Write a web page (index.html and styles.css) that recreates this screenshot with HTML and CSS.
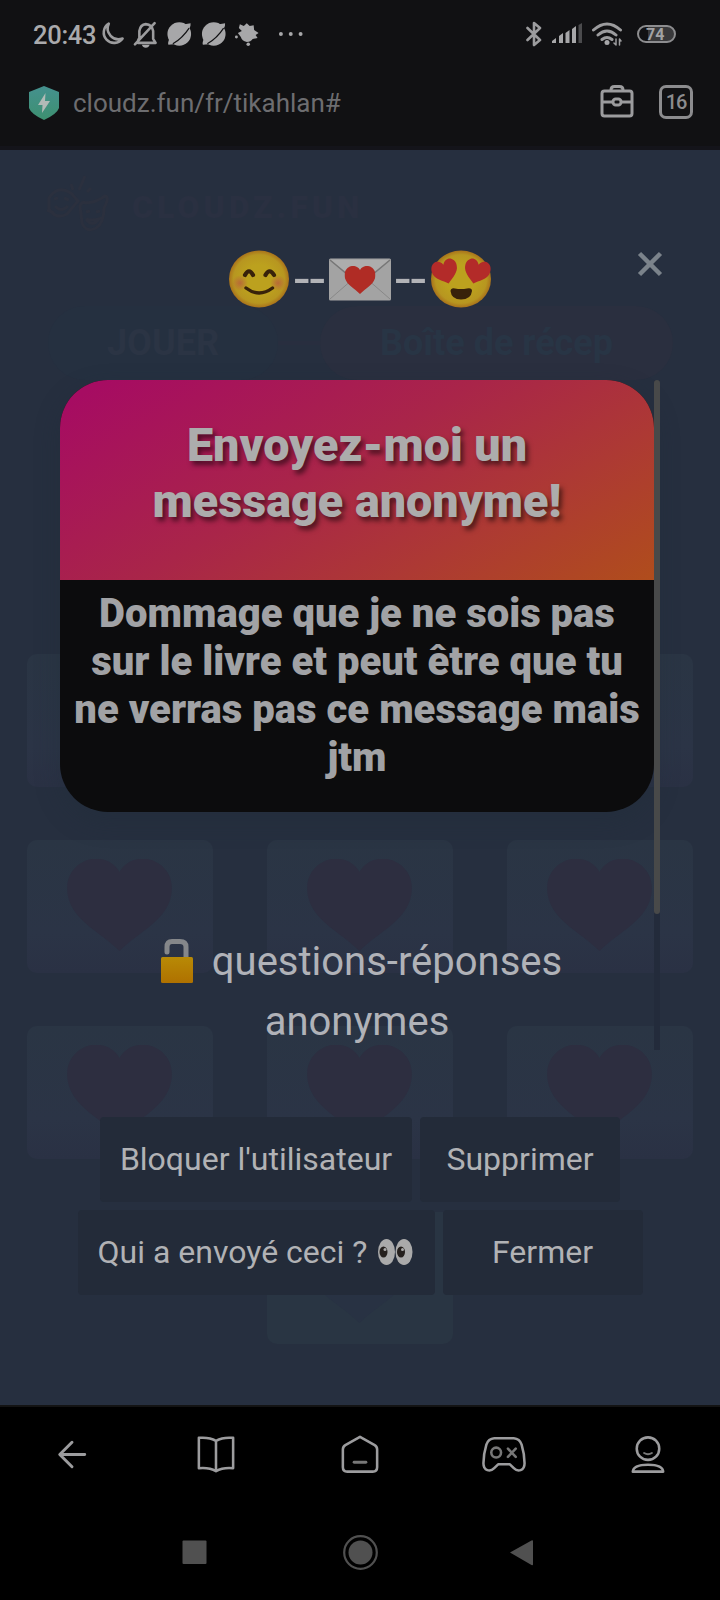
FILE: index.html
```html
<!DOCTYPE html>
<html lang="fr">
<head>
<meta charset="utf-8">
<title>cloudz.fun</title>
<link rel="stylesheet" href="styles.css">
</head>
<body>
<svg class="defs" width="0" height="0" aria-hidden="true">
  <defs>
    <radialGradient id="face" cx=".5" cy=".5" r=".5"><stop offset=".5" stop-color="#bca11e"/><stop offset=".85" stop-color="#b79620"/><stop offset="1" stop-color="#a9721b"/></radialGradient>
    <radialGradient id="blush"><stop offset="0" stop-color="#b8643a" stop-opacity=".9"/><stop offset="1" stop-color="#b8643a" stop-opacity="0"/></radialGradient>
    <linearGradient id="lock" x2="0" y2="1"><stop offset="0" stop-color="#b88a06"/><stop offset="1" stop-color="#af7100"/></linearGradient>
    <linearGradient id="shield" x2="0" y2="1"><stop offset="0" stop-color="#45918f"/><stop offset="1" stop-color="#3d9070"/></linearGradient>
    <symbol id="heart" viewBox="0 0 105 92"><path d="M52.500 13C61-2 78-2 87 2C103 9 108 25 103 41C96 63 72 73 52.500 92C33 73 9 63 2 41C-3 25 2 9 18 2C27-2 44-2 52.500 13Z"/></symbol>
  </defs>
</svg>
<div class="phone">
  <header class="top">
    <div class="status">
      <span class="clock">20:43</span>
      <svg class="cell" viewBox="0 0 34 30"><path d="M13 4.500A10.500 10.500 0 1 0 27 19.500A11 11 0 0 1 13 4.500Z" class="line w25"/></svg>
      <svg class="cell" viewBox="0 0 34 30"><path d="M8 24H26L23.500 20V12Q22.500 5.500 16 5Q10.500 5.500 9.500 12V19L8 22M5 25.500L25 4" class="line w25"/><path d="M12 26H20Q19 29 16 29T12 26Z" class="solid"/></svg>
      <svg class="cell" viewBox="0 0 34 30"><circle cx="16.500" cy="15" r="12" class="solid"/><path d="M22 5L28 4Q28.500 6 26.500 10ZM11 25.500L5.500 26Q4.500 24 6.500 20Z" class="solid"/><path d="M10 25Q20 19 26.500 9" fill="none" stroke="#111113" stroke-width="1.200"/></svg>
      <svg class="cell" viewBox="0 0 34 30"><circle cx="17" cy="15" r="12" class="solid"/><path d="M22.500 5L28.500 4Q29 6 27 10ZM11.500 25.500L6 26Q5 24 7 20Z" class="solid"/><path d="M10.500 25Q20.500 19 27 9" fill="none" stroke="#111113" stroke-width="1.200"/></svg>
      <svg class="cell solid" viewBox="0 0 34 30"><path d="M10 5L14 7L17 4L20 7L24 6L24.500 11L29 14L26 16L28 19L23 20Q21 23 17 23Q12 22 11 18L8 14L12 12L9 9Z"/><circle cx="6.500" cy="18" r="1.500"/><circle cx="18.500" cy="25.500" r="1.800"/></svg>
      <svg class="cell dots" viewBox="0 0 34 30"><g class="solid"><circle cx="7" cy="15" r="2"/><circle cx="17" cy="15" r="2"/><circle cx="27" cy="15" r="2"/></g></svg>
      <div class="system">
        <svg width="16" height="26" viewBox="0 0 16 26"><path d="M1.500 7L14 19L8 24V2L14 7L1.500 19" class="line w25"/></svg>
        <svg width="32" height="22" viewBox="0 0 32 22"><path class="solid" d="M1 20V18L5 15V20ZM8 20V13L12 10V20ZM14.500 20V10L18.500 7V20ZM21 20V6L25 3V20Z"/><path d="M27.500 20V2L31 0V20Z" fill="#4b4b4d"/></svg>
        <svg width="31" height="24" viewBox="0 0 31 24"><path d="M1.500 8Q15 -4 28.500 8M6 13Q15 5 24 13M10 17.500Q15 13.500 20 17.500" class="line w3"/><circle cx="15" cy="20.500" r="2.500" class="solid"/><path d="M24 17V23M22 21L24 23M27.500 23V17L29 19" class="line w15"/></svg>
        <div class="battery">74</div>
      </div>
    </div>
    <div class="address">
      <svg width="32" height="36" viewBox="0 0 32 36"><path d="M16 1L31 7V23Q29 29 16 35Q3 29 1 23V7Z" fill="url(#shield)"/><path d="M17.500 8L10 20H14.500L14 28L22 16H17Z" fill="#b1bab7"/></svg>
      <span class="url">cloudz.fun/fr/tikahlan#</span>
      <svg class="case" width="36" height="36" viewBox="0 0 36 36"><g class="line w3"><rect x="2" y="6" width="30" height="25" rx="2.500"/><path d="M11 5Q11 1.500 14.500 1.500H19.500Q23 1.500 23 5M3 17H12.500M21.500 17H31"/><rect x="13" y="14" width="8" height="6" rx="2.700"/></g></svg>
      <span class="tabs">16</span>
    </div>
  </header>

  <main class="page">
    <div class="ghost" aria-hidden="true">
      <div class="brand">
        <svg width="66" height="64" viewBox="0 0 66 64"><g class="ghostline"><path d="M5 24Q14 10 28 20L34 27L23 40Q12 46 5 35ZM3 36L10 39M38 28Q48 31 61 22Q66 23 60 34Q60 49 52 54Q42 59 38 49L36 32Q37 27 43 29M10 25L14 24M20 24L25 26M11 32Q17 39 24 32M42 38L46 37M52 38L56 37M42 45Q48 54 55 45Q48 47 42 45M29 16L27 10M35 16L41 2M43 18L47 14"/></g></svg>
        <span>CLOUDZ.FUN</span>
      </div>
      <div class="tabsrow"><span class="play">JOUER</span><span class="link"></span><span class="inbox">Boîte de récep</span></div>
      <div class="mails">
        <div class="mail"><svg class="h"><use href="#heart"/></svg></div><div class="mail"><svg class="h"><use href="#heart"/></svg></div><div class="mail"><svg class="h"><use href="#heart"/></svg></div>
        <div class="mail"><svg class="h"><use href="#heart"/></svg></div><div class="mail"><svg class="h"><use href="#heart"/></svg></div><div class="mail"><svg class="h"><use href="#heart"/></svg></div>
        <div class="mail"><svg class="h"><use href="#heart"/></svg></div><div class="mail"><svg class="h"><use href="#heart"/></svg></div><div class="mail"><svg class="h"><use href="#heart"/></svg></div>
        <div class="mail last"><svg class="h"><use href="#heart"/></svg></div>
      </div>
    </div>

    <section class="dialog">
      <svg class="close" width="26" height="26" viewBox="0 0 26 26"><path d="M2.500 2.500L23.500 23.500M23.500 2.500L2.500 23.500"/></svg>
      <div class="title">
        <svg width="62" height="60" viewBox="0 0 62 60"><ellipse cx="31" cy="30" rx="30" ry="28.500" fill="url(#face)"/><circle cx="12" cy="34" r="8" fill="url(#blush)"/><circle cx="50" cy="34" r="8" fill="url(#blush)"/><path d="M17 26Q21 18.500 25 26M37.500 26Q41.500 18.500 46 26" fill="none" stroke="#38220a" stroke-width="4.200" stroke-linecap="round"/><path d="M18 39Q31 49 44.500 39" fill="none" stroke="#38220a" stroke-width="3.400" stroke-linecap="round"/></svg>
        <span class="dash">--</span>
        <svg width="62" height="60" viewBox="0 0 62 60"><rect y="9.500" width="62" height="42" rx="1.500" fill="#a3a3a3"/><path d="M1 11L31 34L61 11Z" fill="#adadad"/><path d="M1 11L25 31M61 11L37 31" stroke="#777" stroke-width="1.600"/><path d="M1 50L24 30M61 50L38 30" stroke="#888" stroke-width="1"/><svg x="15.500" y="17" width="31" height="28" viewBox="0 0 105 92" preserveAspectRatio="none" fill="#b02c25"><use href="#heart" width="105" height="92"/></svg></svg>
        <span class="dash">--</span>
        <svg width="62" height="60" viewBox="0 0 62 60"><ellipse cx="31" cy="30" rx="30" ry="28.500" fill="url(#face)"/><g fill="#b32b29"><path transform="rotate(-13 15 23)" d="M15 15.500C18 10 22 10.500 24 11.500C28 14 28.500 18 27.500 22C25.500 28 20 31 16 35C11 31 4 28.500 2.500 22.500C1.500 18 2.500 14 6 12C9 10.500 13 11.500 15 15.500Z"/><path transform="rotate(13 47 23)" d="M47 15.500C44 10 40 10.500 38 11.500C34 14 33.500 18 34.500 22C36.500 28 42 31 46 35C51 31 58 28.500 59.500 22.500C60.500 18 59.500 14 56 12C53 10.500 49 11.500 47 15.500Z"/></g><path d="M20.500 42Q21 38.500 25 39.500Q31 40.500 37 39.500Q42 38.500 42 42Q41 50.500 31 50.500Q21.500 50.500 20.500 42Z" fill="#38220a"/></svg>
      </div>

      <div class="scroller">
        <div class="content">
          <article class="card">
            <h1>Envoyez-moi un<br>message anonyme!</h1>
            <p>Dommage que je ne sois pas<br>sur le livre et peut être que tu<br>ne verras pas ce message mais<br>jtm</p>
          </article>
          <div class="caption"><svg width="34" height="46" viewBox="0 0 34 46"><path d="M7 14V9Q7 3.500 12 3.500H20Q26 3.500 26 9V20" fill="none" stroke="#85878a" stroke-width="5" stroke-linecap="round"/><rect x="1" y="19" width="32" height="26" rx="1.500" fill="url(#lock)"/></svg><span>questions-réponses</span><br>anonymes</div>
        </div>
        <div class="track"><div class="thumb"></div></div>
      </div>

      <div class="actions">
        <div class="pair"><button class="b1">Bloquer l'utilisateur</button><button class="b2">Supprimer</button></div>
        <div class="pair"><button class="b3">Qui a envoyé ceci ?<svg width="36" height="36" viewBox="0 0 36 36"><g fill="#aaa"><ellipse cx="9.500" cy="18" rx="8.500" ry="13"/><ellipse cx="27" cy="18" rx="8.500" ry="13"/></g><g fill="#25201d"><ellipse cx="6.500" cy="18" rx="4" ry="5.500"/><ellipse cx="24" cy="18" rx="4" ry="5.500"/></g><g fill="#aaa"><circle cx="8" cy="15.500" r="1.500"/><circle cx="25.500" cy="15.500" r="1.500"/></g></svg></button><button class="b2">Fermer</button></div>
      </div>
    </section>
  </main>

  <nav class="tools">
    <svg viewBox="0 0 48 48"><path d="M37 24H12M24 11.500L11.500 24L24 36.500" class="line w3"/></svg>
    <svg viewBox="0 0 48 48"><path d="M24 10Q17 6 6.500 7V38Q17 37 24 41Q31 37 41.500 38V7Q31 6 24 10V41" class="line w25"/></svg>
    <svg viewBox="0 0 48 48"><path d="M24 6L39 14.500Q41.500 16 41.500 19V37Q41.500 41.500 37 41.500H11Q6.500 41.500 6.500 37V19Q6.500 16 9 14.500Z" class="line w25"/><path d="M18 32H30" class="line w3 dim"/></svg>
    <svg viewBox="0 0 48 48"><path d="M14 7.500H34Q40 8 42 14Q45 24 45 33C45 41 38 42 34 38L30 34H18L14 38C10 42 3 41 3 33Q3 24 6 14Q8 8 14 7.500Z" class="line w25"/><circle cx="16" cy="22" r="5" class="line w25 dim"/><path d="M28 18L36 26.500M36 18L28 26.500" class="line w25 dim"/></svg>
    <svg viewBox="0 0 48 48"><circle cx="24" cy="18" r="11.500" class="line w25"/><path d="M8.500 41.500Q9 34.500 24 34.500T39.500 41.500Z" class="line w25"/><path d="M20 22.500Q24 25 28 22.500" class="line w2 dim"/></svg>
  </nav>
  <footer class="system-nav">
    <svg width="36" height="36" viewBox="0 0 36 36"><rect x="3.500" y="5.500" width="24" height="23.500" rx="1"/></svg>
    <svg width="36" height="36" viewBox="0 0 36 36"><circle cx="18.500" cy="17.500" r="12"/><circle cx="18.500" cy="17.500" r="16.300" fill="none" stroke="#505050" stroke-width="2.200"/></svg>
    <svg width="36" height="36" viewBox="0 0 36 36"><path d="M5 17.500L26.500 5.500Q28 4.500 28 6.500V29.500Q28 30.500 26.500 30Z"/></svg>
  </footer>
</div>
</body>
</html>
```

FILE: styles.css
```css
* { box-sizing: border-box; }
body { margin: 0; font-family: Roboto, "Noto Sans", sans-serif; background: #000; }
.defs { position: absolute; }
svg { display: block; flex: none; }
.phone { width: 720px; height: 1600px; display: grid; grid-template-rows: 150px 1255px 95px 100px; overflow: hidden; }

.line { fill: none; stroke: #9c9c9e; stroke-linecap: round; stroke-linejoin: round; }
.solid { fill: #a7a7a9; }
.w15 { stroke-width: 1.5; }
.w2 { stroke-width: 2; }
.w25 { stroke-width: 2.6; }
.w3 { stroke-width: 3; }
.dim { stroke: #777; }

/* Status bar and address bar */
.top { background: #111113; border-bottom: 4px solid #14141a; }
.status { height: 68px; display: flex; align-items: center; padding: 0 44px 0 33px; }
.clock { width: 63px; color: #aaaaac; font-size: 25.500px; font-weight: 500; line-height: 30px; white-space: nowrap; letter-spacing: -.3px; padding-top: 2px; }
.cell { width: 33.500px; height: 30px; }
.dots { margin-left: 10px; }
.system { display: flex; align-items: center; margin-left: auto; gap: 9px; }
.battery { width: 39px; height: 18px; margin-left: 5px; border: 2px solid #8d8d8f; border-radius: 9px; color: #a2a2a4; background: linear-gradient(90deg, #111113 25%, #39393b 25%); font-size: 16px; font-weight: 700; line-height: 15px; padding-left: 7px; }
.address { height: 70px; display: flex; align-items: center; padding: 0 27px 0 28px; }
.url { margin-left: 13px; color: #6d6d70; font-size: 26px; line-height: 32px; white-space: nowrap; }
.case { margin-left: auto; }
.tabs { width: 34px; height: 34px; margin: -2px 0 0 23px; border: 3px solid #8c8c8e; border-radius: 7px; color: #8c8c8e; font-size: 20px; font-weight: 500; line-height: 28px; text-align: center; letter-spacing: -1px; }

/* Dimmed page behind the dialog */
.page { position: relative; background: #262f3f; }
.ghost { padding: 24px 27px 0; }
.brand { display: flex; height: 64px; margin-left: 17px; color: #2a3041; font-size: 32px; font-weight: 900; letter-spacing: 4px; line-height: 66px; gap: 22px; }
.ghostline { fill: none; stroke: #2b303e; stroke-width: 3; }
.tabsrow { display: flex; align-items: center; margin: 68px -7px 0 21px; height: 74px; font-size: 36px; font-weight: 700; line-height: 74px; text-align: center; white-space: nowrap; }
.play { width: 230px; background: #253040; color: #2b3444; border-radius: 37px; }
.link { width: 42px; height: 4px; background: #282e3f; }
.inbox { width: 353px; background: #2a2f3f; color: #283545; border-radius: 37px; }
.mails { display: grid; grid-template-columns: repeat(3, 186px); gap: 53px 54px; margin-top: 274px; }
.mail { height: 133px; padding: 19px 0 0 40px; border-radius: 10px; background: linear-gradient(#2a3544, #2b3446 70%, #2a3144); }
.h { width: 105px; height: 92px; fill: #2d2e40; }
.last { grid-column: 2; height: 132px; background: #293543; }
.last .h { fill: #283243; }

/* Dialog */
.dialog { position: absolute; inset: 0; }
.close { position: absolute; left: 637px; top: 101px; stroke: #7b838b; stroke-width: 4.5; }
.title { display: flex; align-items: center; justify-content: center; height: 60px; margin-top: 99px; }
.dash { width: 37px; margin: 0 1px; padding-left: 3px; color: #b2b3b7; font-size: 56px; line-height: 60px; white-space: nowrap; flex: none; }
.scroller { display: flex; height: 670px; margin: 71px 60px 0; }
.content { width: 594px; }
.track { width: 6px; background: #232b3b; }
.thumb { height: 534px; border-radius: 3px; background: #484949; }
.card { height: 432px; border-radius: 48px; overflow: hidden; background: #0c0c0d; box-shadow: 0 10px 24px #202c3966; text-align: center; white-space: nowrap; }
.card h1 { margin: 0; height: 200px; padding-top: 37px; background: linear-gradient(150deg, #a60c62 5%, #a92549 45%, #ad3934 72%, #b04d1c); color: #acacac; font-size: 46.700px; font-weight: 900; line-height: 56px; text-shadow: 3px 4px 5px #0008; }
.card p { margin: 0; padding-top: 10px; color: #a1a2a5; font-size: 40px; font-weight: 900; line-height: 48px; }
.caption { margin-top: 120px; color: #b0b2b8; font-size: 40px; line-height: 60px; text-align: center; white-space: nowrap; }
.caption svg { display: inline-block; vertical-align: -9px; margin: 0 18px 0 8px; }
.actions { display: grid; gap: 8px; margin-top: 67px; }
.pair { display: flex; justify-content: center; gap: 8px; }
.pair button { display: flex; justify-content: center; align-items: center; height: 85px; padding: 0 0 2px; border: 0; border-radius: 4px; background: #232b39; color: #b1b2b5; font: 32px/40px Roboto, sans-serif; white-space: nowrap; }
.pair .b1 { width: 312px; }
.pair .b2 { width: 200px; }
.pair .b3 { width: 357px; gap: 10px; padding-right: 1px; }

/* Bottom bars */
.tools { display: flex; align-items: center; border-top: 2px solid #131313; background: #000; }
.tools svg { flex: 1; width: 144px; height: 47px; margin-top: 1px; }
.system-nav { display: flex; justify-content: center; gap: 127px; padding: 35px 0 0; background: #000; fill: #505050; }
```
